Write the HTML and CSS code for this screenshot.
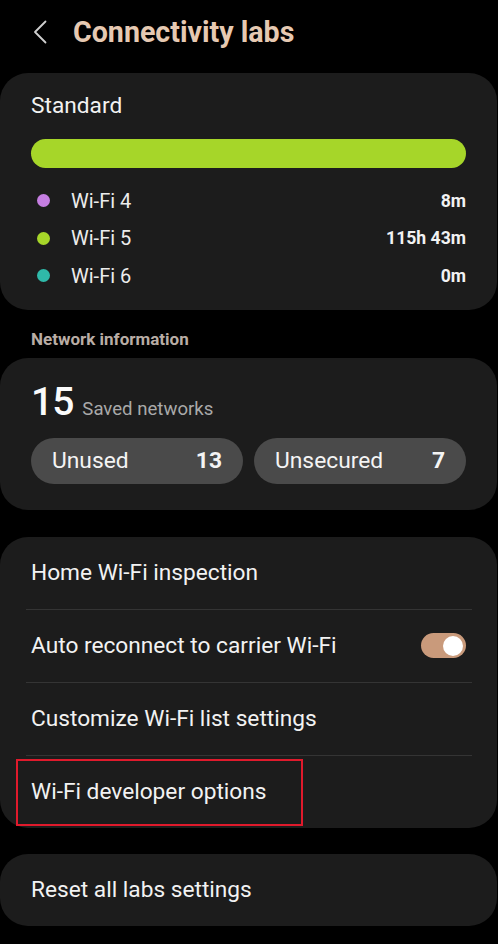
FILE: index.html
```html
<!DOCTYPE html>
<html lang="en">
<head>
<meta charset="utf-8">
<title>Connectivity labs</title>
<link rel="stylesheet" href="styles.css">
</head>
<body>
<div class="screen">
  <header class="topbar">
    <svg class="back" width="14" height="24" viewBox="0 0 14 24"><path d="M12.5 1.5 L2 12 L12.5 22.5" fill="none" stroke="#cfcfcf" stroke-width="1.8" stroke-linecap="round" stroke-linejoin="round"/></svg>
    <h1 class="title">Connectivity labs</h1>
  </header>

  <section class="card standard">
    <div class="card-title">Standard</div>
    <div class="bar"></div>
    <div class="legend">
      <div class="legend-row"><span class="dot dot-4"></span><span class="lbl">Wi-Fi 4</span><span class="val">8m</span></div>
      <div class="legend-row"><span class="dot dot-5"></span><span class="lbl">Wi-Fi 5</span><span class="val">115h 43m</span></div>
      <div class="legend-row"><span class="dot dot-6"></span><span class="lbl">Wi-Fi 6</span><span class="val">0m</span></div>
    </div>
  </section>

  <div class="section-label">Network information</div>

  <section class="card netinfo">
    <div class="saved"><span class="big">15</span><span class="saved-lbl">Saved networks</span></div>
    <div class="pills">
      <div class="pill"><span>Unused</span><span class="num">13</span></div>
      <div class="pill"><span>Unsecured</span><span class="num">7</span></div>
    </div>
  </section>

  <section class="card list">
    <div class="item">Home Wi-Fi inspection</div>
    <div class="item item-toggle"><span>Auto reconnect to carrier Wi-Fi</span><span class="toggle"><span class="knob"></span></span></div>
    <div class="item">Customize Wi-Fi list settings</div>
    <div class="item item-mark">Wi-Fi developer options<span class="mark"></span></div>
  </section>

  <section class="card list single">
    <div class="item">Reset all labs settings</div>
  </section>
</div>
</body>
</html>
```
FILE: styles.css
```css
* { box-sizing: border-box; }
html, body { margin: 0; padding: 0; background: #000; }
body {
  font-family: Roboto, "Noto Sans", "Liberation Sans", sans-serif;
  color: #f2f2f2;
  width: 498px;
  height: 944px;
  overflow: hidden;
}
.screen { display: flex; flex-direction: column; }

.topbar {
  height: 73px;
  display: flex;
  align-items: flex-start;
  padding: 8px 0 0 33px;
}
.back { margin-top: 12px; }
.title {
  margin: 0 0 0 26px;
  font-size: 28.6px;
  line-height: 48px;
  font-weight: 700;
  color: #e6c9b2;
}

.card {
  background: #1c1c1c;
  border-radius: 28px;
  width: 497px;
}

.standard { padding: 20px 31px 15px 31px; }
.card-title { font-size: 22.7px; line-height: 26px; }
.bar {
  margin-top: 20px;
  height: 29px;
  border-radius: 15px;
  background: #a6d629;
}
.legend { margin-top: 14px; }
.legend-row {
  display: flex;
  align-items: center;
  height: 37.5px;
}
.dot {
  width: 13px; height: 13px; border-radius: 50%;
  margin-left: 6px; margin-right: 21px;
}
.dot-4 { background: #c57ee1; }
.dot-5 { background: #a6d629; }
.dot-6 { background: #2fb9a9; }
.lbl { font-size: 20px; color: #ececec; flex: 1; }
.val { font-size: 17.6px; font-weight: 700; color: #f2f2f2; }

.section-label {
  margin: 19px 0 9px 31px;
  font-size: 17px;
  line-height: 20px;
  font-weight: 700;
  color: #b9ada5;
}

.netinfo { padding: 22px 31px 26px 31px; }
.saved { display: flex; align-items: baseline; height: 44px; }
.big { font-size: 39px; line-height: 44px; font-weight: 500; color: #fafafa; letter-spacing: -1px; }
.saved-lbl { font-size: 18.6px; color: #a9a9a9; margin-left: 9px; }
.pills { display: flex; gap: 11px; margin-top: 14px; }
.pill {
  flex: 1;
  height: 46px;
  border-radius: 23px;
  background: #4a4a4a;
  display: flex;
  align-items: center;
  justify-content: space-between;
  padding: 0 21px 0 21px;
  font-size: 22.8px;
  color: #f4f4f4;
}
.num { font-weight: 700; }

.list { margin-top: 27px; }
.item {
  height: 72px;
  display: flex;
  align-items: center;
  padding: 0 31px;
  font-size: 22.7px;
  color: #f2f2f2;
  position: relative;
}
.item + .item::before {
  content: "";
  position: absolute;
  top: -1px; left: 26px; right: 25px;
  height: 1px;
  background: #343434;
}
.item + .item { margin-top: 1px; }
.item-toggle { justify-content: space-between; }
.toggle {
  width: 45px; height: 25px; border-radius: 13px;
  background: #c99a7b;
  display: flex; align-items: center; justify-content: flex-end;
  padding-right: 3px;
}
.knob { width: 20px; height: 20px; border-radius: 50%; background: #fff; }
.mark {
  position: absolute;
  left: 16px; top: 3px;
  width: 287px; height: 67px;
  border: 2px solid #e01a2c;
}
.single { margin-top: 26px; }
```
